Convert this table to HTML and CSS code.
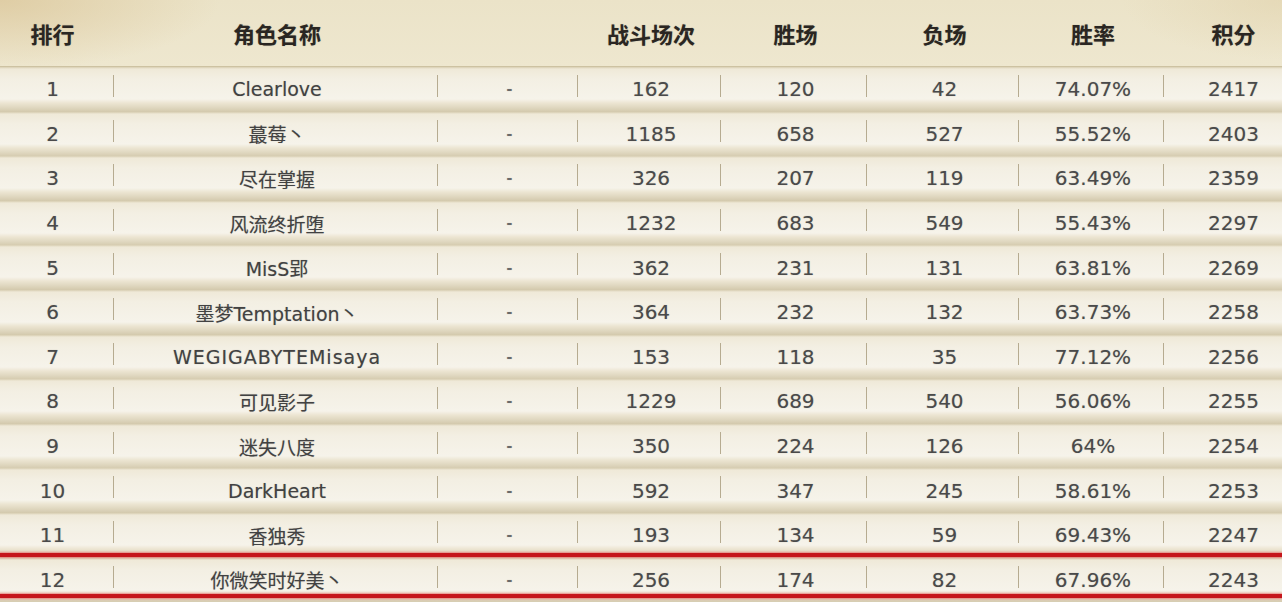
FILE: index.html
```html
<!DOCTYPE html>
<html lang="zh-CN">
<head>
<meta charset="utf-8">
<title>排行榜</title>
<link rel="stylesheet" href="styles.css">
</head>
<body>
<div class="board">
  <div class="row head">
    <div class="cell c-rank">排行</div>
    <div class="cell c-name">角色名称</div>
    <div class="cell c-dash"></div>
    <div class="cell c-num">战斗场次</div>
    <div class="cell c-num">胜场</div>
    <div class="cell c-num">负场</div>
    <div class="cell c-num">胜率</div>
    <div class="cell c-score">积分</div>
  </div>

  <div class="row data">
    <div class="cell c-rank">1</div><div class="cell c-name sep">Clearlove</div><div class="cell c-dash sep">-</div><div class="cell c-num sep">162</div><div class="cell c-num sep">120</div><div class="cell c-num sep">42</div><div class="cell c-num sep">74.07%</div><div class="cell c-score sep">2417</div>
  </div>
  <div class="row data">
    <div class="cell c-rank">2</div><div class="cell c-name sep">蕞莓丶</div><div class="cell c-dash sep">-</div><div class="cell c-num sep">1185</div><div class="cell c-num sep">658</div><div class="cell c-num sep">527</div><div class="cell c-num sep">55.52%</div><div class="cell c-score sep">2403</div>
  </div>
  <div class="row data">
    <div class="cell c-rank">3</div><div class="cell c-name sep">尽在掌握</div><div class="cell c-dash sep">-</div><div class="cell c-num sep">326</div><div class="cell c-num sep">207</div><div class="cell c-num sep">119</div><div class="cell c-num sep">63.49%</div><div class="cell c-score sep">2359</div>
  </div>
  <div class="row data">
    <div class="cell c-rank">4</div><div class="cell c-name sep">风流终折堕</div><div class="cell c-dash sep">-</div><div class="cell c-num sep">1232</div><div class="cell c-num sep">683</div><div class="cell c-num sep">549</div><div class="cell c-num sep">55.43%</div><div class="cell c-score sep">2297</div>
  </div>
  <div class="row data">
    <div class="cell c-rank">5</div><div class="cell c-name sep">MisS郢</div><div class="cell c-dash sep">-</div><div class="cell c-num sep">362</div><div class="cell c-num sep">231</div><div class="cell c-num sep">131</div><div class="cell c-num sep">63.81%</div><div class="cell c-score sep">2269</div>
  </div>
  <div class="row data">
    <div class="cell c-rank">6</div><div class="cell c-name sep">墨梦Temptation丶</div><div class="cell c-dash sep">-</div><div class="cell c-num sep">364</div><div class="cell c-num sep">232</div><div class="cell c-num sep">132</div><div class="cell c-num sep">63.73%</div><div class="cell c-score sep">2258</div>
  </div>
  <div class="row data">
    <div class="cell c-rank">7</div><div class="cell c-name sep wide">WEGIGABYTEMisaya</div><div class="cell c-dash sep">-</div><div class="cell c-num sep">153</div><div class="cell c-num sep">118</div><div class="cell c-num sep">35</div><div class="cell c-num sep">77.12%</div><div class="cell c-score sep">2256</div>
  </div>
  <div class="row data">
    <div class="cell c-rank">8</div><div class="cell c-name sep">可见影子</div><div class="cell c-dash sep">-</div><div class="cell c-num sep">1229</div><div class="cell c-num sep">689</div><div class="cell c-num sep">540</div><div class="cell c-num sep">56.06%</div><div class="cell c-score sep">2255</div>
  </div>
  <div class="row data">
    <div class="cell c-rank">9</div><div class="cell c-name sep">迷失八度</div><div class="cell c-dash sep">-</div><div class="cell c-num sep">350</div><div class="cell c-num sep">224</div><div class="cell c-num sep">126</div><div class="cell c-num sep">64%</div><div class="cell c-score sep">2254</div>
  </div>
  <div class="row data">
    <div class="cell c-rank">10</div><div class="cell c-name sep">DarkHeart</div><div class="cell c-dash sep">-</div><div class="cell c-num sep">592</div><div class="cell c-num sep">347</div><div class="cell c-num sep">245</div><div class="cell c-num sep">58.61%</div><div class="cell c-score sep">2253</div>
  </div>
  <div class="row data">
    <div class="cell c-rank">11</div><div class="cell c-name sep">香独秀</div><div class="cell c-dash sep">-</div><div class="cell c-num sep">193</div><div class="cell c-num sep">134</div><div class="cell c-num sep">59</div><div class="cell c-num sep">69.43%</div><div class="cell c-score sep">2247</div>
  </div>
  <div class="row data hl">
    <div class="cell c-rank">12</div><div class="cell c-name sep">你微笑时好美丶</div><div class="cell c-dash sep">-</div><div class="cell c-num sep">256</div><div class="cell c-num sep">174</div><div class="cell c-num sep">82</div><div class="cell c-num sep">67.96%</div><div class="cell c-score sep">2243</div>
  </div>
</div>
</body>
</html>
```

FILE: styles.css
```css
html, body {
  margin: 0;
  padding: 0;
}
body {
  width: 1282px;
  height: 602px;
  overflow: hidden;
  background: #eee8d4;
  font-family: "DejaVu Sans", "Noto Sans CJK SC", sans-serif;
}

.board {
  display: flex;
  flex-direction: column;
}

.row {
  display: grid;
  grid-template-columns: 113px 324px 140px 143px 146px 152px 145px 119px;
}

.cell {
  display: flex;
  align-items: center;
  justify-content: center;
  white-space: nowrap;
}

.c-rank { padding-right: 8px; }
.c-name { padding-left: 4px; }
.c-dash { padding-left: 5px; }
.c-num { padding-left: 5px; }
.c-score { padding-left: 22px; }

/* header */
.head {
  height: 67px;
  box-sizing: border-box;
  border-bottom: 1px solid #cdc2a2;
  background:
    radial-gradient(ellipse 220px 70px at 0 0, rgba(218, 196, 150, 0.7) 0%, rgba(218, 196, 150, 0) 100%),
    radial-gradient(ellipse 160px 60px at 100% 0, rgba(224, 208, 168, 0.5) 0%, rgba(224, 208, 168, 0) 100%),
    linear-gradient(to bottom, #ebe3c8 0%, #eee7cf 100%);
}
.head .cell {
  font-family: "Noto Sans CJK SC", "DejaVu Sans", sans-serif;
  font-weight: 700;
  font-size: 22px;
  color: #2a2622;
  text-shadow: 0 0 1px rgba(40, 36, 30, 0.4);
}

/* data rows */
.data {
  height: 44.6px;
  background: linear-gradient(to bottom,
    #d8ceb2 0px,
    #efe9d8 2px,
    #f3efe3 12px,
    #f6f3ea 32px,
    #ece5d2 36px,
    #e1d9c2 40px,
    #d4caae 44.6px);
  color: #4a4a4a;
  font-size: 20px;
  text-shadow: 0 0 1px rgba(60, 60, 60, 0.35);
}
.data .c-name {
  font-family: "DejaVu Sans", "Noto Sans CJK SC", sans-serif;
  font-size: 19px;
  color: #424242;
}
.data .wide {
  letter-spacing: 1px;
}
.data .c-dash {
  font-size: 14px;
  font-weight: 700;
  color: #6a6a6a;
}

.sep {
  background: linear-gradient(#b6ab90, #b6ab90) no-repeat left 8px / 1px 22px;
}

/* highlighted row (red frame) */
.hl {
  position: relative;
}
.hl::before,
.hl::after {
  content: "";
  position: absolute;
  left: 0;
  right: 0;
  height: 4px;
  background: #c5151b;
  box-shadow: 0 0 2px 1px rgba(232, 110, 110, 0.75);
}
.hl::before { top: -5px; }
.hl::after { bottom: 4px; }
```
